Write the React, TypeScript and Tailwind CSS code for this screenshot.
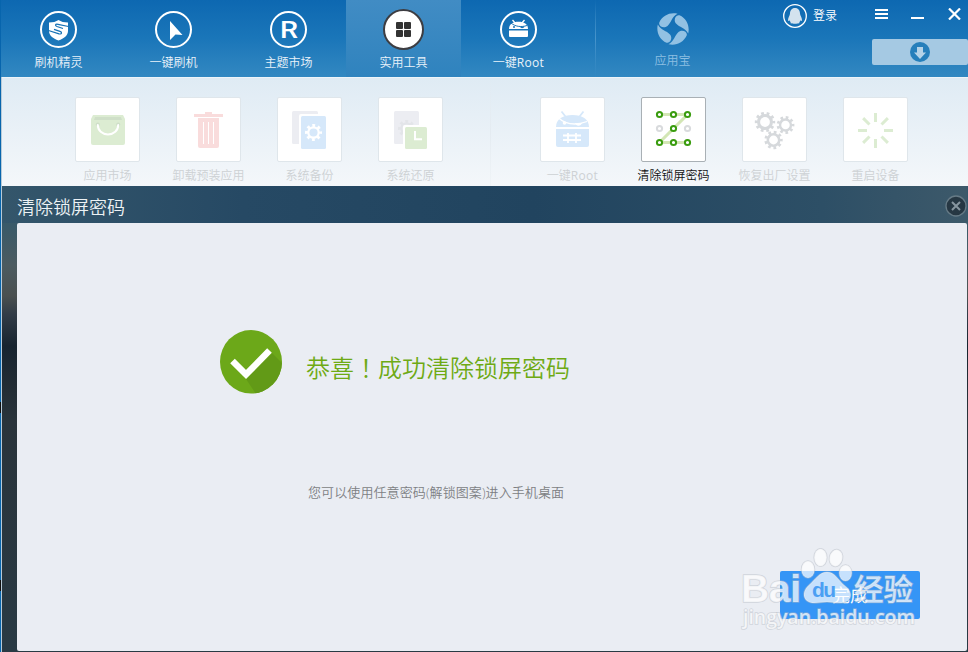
import type { ReactNode } from 'react';

type GearProps = { cx: number; cy: number; r: number; color: string; hole?: string; teeth?: number };

// solid ring with square teeth drawn as a dashed outer stroke
function Gear({ cx, cy, r, color, hole = '#fff', teeth = 8 }: GearProps) {
  const tr = r - 1.5;
  const step = (2 * Math.PI * tr) / (teeth * 2);
  return (
    <g>
      <circle cx={cx} cy={cy} r={tr} fill="none" stroke={color} strokeWidth="3" strokeDasharray={`${step} ${step}`} strokeDashoffset={step / 2} />
      <circle cx={cx} cy={cy} r={r - 2.2} fill={color} />
      <circle cx={cx} cy={cy} r={r * 0.48} fill={hole} />
    </g>
  );
}

function ToolSvg({ children }: { children: ReactNode }) {
  return (
    <svg width="65" height="65" viewBox="0 0 65 65" className="-m-px block">
      {children}
    </svg>
  );
}

const tools = [
  {
    label: '应用市场',
    icon: (
      <ToolSvg>
        <path d="M18 18h30l2 4v24a2 2 0 0 1-2 2H18a2 2 0 0 1-2-2V22z" fill="#dcecd2" />
        <path d="M20 20h26l1 3H19z" fill="#cfdfc8" />
        <circle cx="22.800" cy="27.500" r="2" fill="#cfdfc8" />
        <circle cx="43.200" cy="27.500" r="2" fill="#cfdfc8" />
        <path d="M22.800 28c0 5.500 4.500 9.500 10.200 9.500S43.200 33.500 43.200 28" fill="none" stroke="#fff" strokeWidth="2" strokeLinecap="round" />
      </ToolSvg>
    ),
  },
  {
    label: '卸载预装应用',
    icon: (
      <ToolSvg>
        <path d="M18 17h11v-2h7v2h11v3H18z" fill="#f9dcdc" />
        <path d="M22 21h21v28a2 2 0 0 1-2 2H24a2 2 0 0 1-2-2z" fill="#f9dcdc" />
        <path d="M27.500 25v22M32.500 25v22M37.500 25v22" stroke="#fff" />
      </ToolSvg>
    ),
  },
  {
    label: '系统备份',
    icon: (
      <ToolSvg>
        <rect x="15" y="14" width="26" height="33" rx="1.500" fill="#ecedf2" />
        <rect x="22" y="17" width="29" height="37" rx="2" fill="#fff" />
        <rect x="24" y="19" width="25" height="33" rx="1.500" fill="#d6e8fa" />
        <Gear cx={36.5} cy={35.5} r={8.5} color="#fff" hole="#d6e8fa" />
      </ToolSvg>
    ),
  },
  {
    label: '系统还原',
    icon: (
      <ToolSvg>
        <rect x="16" y="14" width="25" height="33" rx="1.500" fill="#ecedf2" />
        <Gear cx={28.5} cy={31.5} r={8.5} color="#e3e5e9" hole="#ecedf2" />
        <rect x="25" y="28" width="26" height="26" rx="2" fill="#fff" />
        <rect x="27" y="30" width="22" height="22" rx="1.500" fill="#dcecd2" />
        <path d="M37 34v8.200h7" fill="none" stroke="#fff" strokeWidth="2" />
      </ToolSvg>
    ),
  },
];

const deviceTools = [
  {
    label: '一键Root',
    icon: (
      <ToolSvg>
        <path d="M21.500 14.500l4 5M43.500 14.500l-4 5" stroke="#d6e8fa" strokeWidth="1.800" />
        <path d="M16 30c0-8 7-12 16.500-12S49 22 49 30z" fill="#d6e8fa" />
        <path d="M18 20.500c7 6.500 17 8.500 29 4" fill="none" stroke="#fff" strokeWidth="1.300" />
        <circle cx="24.500" cy="26" r="1.800" fill="#fff" />
        <path d="M35 26h7c-.5 3-6 4-7 0z" fill="#fff" />
        <path d="M16 32h33v16a2 2 0 0 1-2 2H18a2 2 0 0 1-2-2z" fill="#d6e8fa" />
        <path d="M23 38.500h18M23 43h18M28 36v10M36 36v10" stroke="#fff" strokeWidth="1.800" />
      </ToolSvg>
    ),
  },
  {
    label: '清除锁屏密码',
    active: true,
    icon: (
      <ToolSvg>
        <path d="M18.500 17.500h28l-28 28h28" fill="none" stroke="#d3e6b5" strokeWidth="3" />
        {[17.5, 31.5, 45.5].map((y) =>
          [18.5, 32.5, 46.5].map((x) => (
            <circle
              key={`${x}-${y}`}
              cx={x}
              cy={y}
              r="2.600"
              fill="#fff"
              stroke={y === 31.5 && x !== 32.5 ? '#d9dbdd' : '#3a9c0f'}
              strokeWidth="2"
            />
          ))
        )}
      </ToolSvg>
    ),
  },
  {
    label: '恢复出厂设置',
    icon: (
      <ToolSvg>
        <Gear cx={23} cy={25} r={10.2} color="#d6d9dc" teeth={10} />
        <Gear cx={43.5} cy={28} r={8.9} color="#d6d9dc" teeth={9} />
        <Gear cx={31.5} cy={43} r={9.2} color="#d6d9dc" teeth={9} />
      </ToolSvg>
    ),
  },
  {
    label: '重启设备',
    icon: (
      <ToolSvg>
        {[0, 45, 90, 135, 180, 225, 270, 315].map((a) => (
          <rect key={a} x="31" y="16" width="3" height="9" fill="#dcecd2" transform={`rotate(${a} 32.5 33.5)`} />
        ))}
      </ToolSvg>
    ),
  },
];

const tabs = [
  {
    label: '刷机精灵',
    icon: (
      <svg width="37" height="37" viewBox="0 0 37 37">
        <path d="M9 11.500c4 0 7-.8 9.500-2.500 2.500 1.700 5.500 2.500 9.500 2.500V20c0 4.500-4 7.500-9.500 9.500C13 27.500 9 24.500 9 20z" fill="#fff" />
        <path d="M28.500 15.500l-10.500-2.200c-3-.6-3.200 1.400-1 2.200l6 2" fill="none" stroke="#1571b5" strokeWidth="1.200" />
        <path d="M8.500 19.500l10.500 3.300c3 .8 3.400-1.600 1-2.400l-6-2" fill="none" stroke="#1571b5" strokeWidth="1.200" />
      </svg>
    ),
  },
  {
    label: '一键刷机',
    icon: (
      <svg width="37" height="37" viewBox="0 0 37 37">
        <path d="M15 10l12.500 14-7-.5L15 29z" fill="#fff" />
      </svg>
    ),
  },
  {
    label: '主题市场',
    icon: (
      <svg width="37" height="37" viewBox="0 0 37 37">
        <text x="10" y="27" fontFamily="Roboto, sans-serif" fontWeight="500" fontSize="24" fill="#fff" textLength="18" lengthAdjust="spacingAndGlyphs">
          R
        </text>
      </svg>
    ),
  },
  {
    label: '实用工具',
    active: true,
    icon: (
      <svg width="37" height="37" viewBox="0 0 37 37" fill="#333">
        <rect x="11" y="11" width="7" height="7" rx="1" />
        <rect x="19" y="11" width="7" height="7" rx="1" />
        <rect x="11" y="19" width="7" height="7" rx="1" />
        <rect x="19" y="19" width="7" height="7" rx="1" />
      </svg>
    ),
  },
  {
    label: '一键Root',
    icon: (
      <svg width="37" height="37" viewBox="0 0 37 37">
        <path d="M12.500 9l3 3.500M24.500 9l-3 3.500" stroke="#fff" strokeWidth="1.300" />
        <path d="M9 18c0-5 4-7.300 9.500-7.300S28 13 28 18z" fill="#fff" />
        <path d="M11 12c4 3.500 10 4.500 16 2.500" fill="none" stroke="#1a74b7" />
        <circle cx="14" cy="16" r="1" fill="#1a74b7" />
        <path d="M20 15.500h4.500c-.5 2-4 2.500-4.500 0z" fill="#1a74b7" />
        <path d="M9 19.500h19V25a1 1 0 0 1-1 1H10a1 1 0 0 1-1-1z" fill="#fff" />
      </svg>
    ),
  },
];

type ToolItem = { label: string; icon: ReactNode; active?: boolean };

function Tool({ label, icon, active }: ToolItem) {
  return (
    <div className="flex w-[101px] flex-col items-center">
      <div className={`size-[65px] rounded-[2px] border bg-white ${active ? 'border-[#a9b0b5]' : 'border-[#dfe6eb]'}`}>{icon}</div>
      <Label className={`mt-[5px] ${active ? 'text-[#111]' : 'text-[#cdd1d4]'}`}>{label}</Label>
    </div>
  );
}

// latin part of a label is set a little heavier and wider than the CJK part
function Label({ children, className }: { children: string; className: string }) {
  const [cjk, latin] = children.split(/(?=[A-Z])/);
  return (
    <span className={`text-[12px] leading-[18px] whitespace-nowrap ${className}`}>
      {cjk}
      {latin && <span className="font-normal tracking-[0.3px]">{latin}</span>}
    </span>
  );
}

function Header() {
  return (
    <header className="flex h-[77px] bg-linear-to-b from-[#0d68b1] via-[#1a76b9] to-[#3288c1] text-white">
      {tabs.map((tab) => (
        <div
          key={tab.label}
          className={`flex w-[115px] flex-col items-center ${tab.active ? 'bg-linear-to-b from-[#418cc4] to-[#2f83be]' : ''}`}
        >
          <div
            className={`flex items-center justify-center rounded-full ${
              tab.active ? 'mt-[9px] size-[41px] border-[2px] border-[#3d3d42] bg-white' : 'mt-[11px] mb-[2px] size-[37px] border-2 border-white'
            }`}
          >
            <div className="flex shrink-0 items-center justify-center">{tab.icon}</div>
          </div>
          <Label className="mt-[4px] text-[#eaf3fa]">{tab.label}</Label>
        </div>
      ))}
      <div className="ml-[19px] w-px bg-linear-to-b from-transparent via-[#4794cb] to-transparent" />
      <div className="ml-[45px] flex w-[64px] flex-col items-center text-[#8dbfe2]">
        <svg width="32" height="32" viewBox="0 0 32 32" className="mt-[13px]" fill="#92c1e3">
          {[0, 90, 180, 270].map((a) => (
            <path key={a} d="M20.500.8C13-1 5.500 2.500 2.300 9.500c-1.200 3.800 4.500 6.500 8.200 3.500C14.500 9.500 14.500 4 20.500.8z" transform={`rotate(${a} 16 16)`} />
          ))}
        </svg>
        <span className="mt-[7px] mr-px text-[12px] leading-[18px]">应用宝</span>
      </div>

      <div className="ml-auto flex flex-col items-end">
        <div className="flex h-[39px] items-start">
          <svg width="24" height="24" viewBox="0 0 24 24" className="mt-[4px]">
            <circle cx="12" cy="12" r="11.300" fill="none" stroke="#fff" strokeWidth="1.300" />
            <path d="M12 4c3.300 0 5 2.500 5 5.500 0 1.800 2 4 2 6.500 0 1-.8 1.500-1.500.3-.3 1-.8 1.500-1.300 2 1 1-.7 1.400-4.200 1.400s-5.200-.4-4.200-1.400c-.5-.5-1-1-1.300-2C5.800 17.500 5 17 5 16c0-2.500 2-4.700 2-6.500C7 6.500 8.700 4 12 4z" fill="#d3e2ee" />
          </svg>
          <span className="mt-[7px] ml-[6px] text-[12px] leading-[18px]">登录</span>
          <div className="mt-[9px] ml-[38px] flex h-[10px] w-[13px] flex-col justify-between">
            <i className="h-[2px] bg-white" />
            <i className="h-[2px] bg-white" />
            <i className="h-[2px] bg-white" />
          </div>
          <i className="mt-[17px] ml-[23px] h-[2px] w-[13px] bg-white" />
          <svg width="13" height="12" viewBox="0 0 13 12" className="mt-[8px] mr-[7px] ml-[24px]">
            <path d="M1 .5l11 11M12 .5l-11 11" stroke="#fff" strokeWidth="2.200" />
          </svg>
        </div>
        <div className="flex h-[26px] w-[96px] items-center justify-center rounded-[2px] bg-[#a5c9e3]">
          <svg width="20" height="20" viewBox="0 0 20 20">
            <circle cx="10" cy="10" r="10" fill="#267fbb" />
            <path d="M7 5h6v5.500h3L10 17l-6-6.500h3z" fill="#b5d3e8" />
          </svg>
        </div>
      </div>
    </header>
  );
}

function Watermark() {
  return (
    <svg width="190" height="96" viewBox="735 542 190 96" className="pointer-events-none absolute top-[319px] left-[718px]">
      <g fill="#fff" fillOpacity=".72" stroke="#b4bac3" strokeOpacity=".5" strokeWidth="1.500" paintOrder="stroke">
        <text x="741" y="602" fontFamily="Liberation Sans, sans-serif" fontWeight="700" fontSize="39" textLength="60">Bai</text>
        <ellipse cx="808" cy="569.500" rx="6.500" ry="8.500" />
        <ellipse cx="820.500" cy="557.500" rx="6.300" ry="8.800" />
        <ellipse cx="836" cy="558" rx="6.500" ry="8.500" transform="rotate(12 836 558)" />
        <ellipse cx="845.500" cy="573" rx="6.300" ry="8" />
        <path d="M827 572c8 0 11 8 17 13 12 9 6 18-4 18-5 0-8-1-13-1s-8 1-13 1c-10 0-14-10-5-18 6-5 10-13 18-13z" />
        <text x="854" y="599.500" fontFamily="Noto Sans CJK SC, sans-serif" fontWeight="500" fontSize="29.500">经验</text>
        <text x="743" y="624" fontFamily="Open Sans, sans-serif" fontWeight="600" fontSize="20" textLength="172" lengthAdjust="spacingAndGlyphs">jingyan.baidu.com</text>
      </g>
      <text x="812" y="597" fontFamily="Liberation Sans, sans-serif" fontWeight="700" fontSize="21" fill="#4b9ff3" textLength="24">du</text>
    </svg>
  );
}

export default function App() {
  return (
    <div className="flex h-[652px] w-[968px] overflow-hidden font-['Open_Sans','Noto_Sans_CJK_SC',sans-serif] font-[350]">
      <div className="flex w-[2px] shrink-0 flex-col border-r border-[#b8cbd8] bg-[#0765ad]">
        <i className="mt-[402px] h-[11px] bg-[#101010]" />
        <i className="mt-[167px] h-[11px] bg-[#101010]" />
      </div>
      <div className="-ml-px flex min-w-0 flex-1 flex-col">
        <Header />
        <div className="ml-px flex h-[109px] border-t border-[#edf4f9] bg-linear-to-b from-[#dfebf4] to-[#f4f7fa] pt-[19px] pl-[55px]">
          {tools.map((t) => (
            <Tool key={t.label} {...t} />
          ))}
          <div className="-mt-[19px] mr-[31px] ml-[29px] w-px bg-linear-to-b from-transparent via-[#e4ebf1] to-[#f0f4f7]" />
          {deviceTools.map((t) => (
            <Tool key={t.label} {...t} />
          ))}
        </div>

        <div className="ml-px flex flex-1 flex-col bg-[linear-gradient(#34566b_0,#3a5a69_40px,#4c5b60_80px,#4a5050_110px,#323c47_128px,#17242f_160px,#222c34_200px,#2a343b_235px,#293a44_100%)] pr-px pb-px">
          <div className="flex h-[37px] items-center justify-between bg-[linear-gradient(90deg,#34566b,#264964_25%,#21445f_55%,#2d4f66_85%,#3d596a)] pl-[15px] text-white">
            <h1 className="mt-[5px] text-[18px] leading-[27px] text-[#edf2f5]">清除锁屏密码</h1>
            <svg width="22" height="22" viewBox="0 0 22 22" className="mt-[3px]">
              <circle cx="11" cy="11" r="10" fill="#263743" stroke="#667a86" strokeWidth="1.300" />
              <path d="M7 7l8 8M15 7l-8 8" stroke="#8796a0" strokeWidth="2" />
            </svg>
          </div>
          <main className="relative ml-[15px] flex flex-1 flex-col rounded-[2px] bg-[#eaedf3]">
            <div className="mt-[107px] ml-[203px] flex">
              <svg width="63" height="64" viewBox="0 0 63 64">
                <defs>
                  <clipPath id="badge">
                    <ellipse cx="31" cy="31.800" rx="31" ry="31.800" />
                  </clipPath>
                </defs>
                <g clipPath="url(#badge)">
                  <rect width="63" height="64" fill="#6ca819" />
                  <path d="M26 49l26-26 20 20-30 30z" fill="#629a17" />
                </g>
                <path d="M12.500 31l13.500 13.500L49.500 20.500" fill="none" stroke="#fff" strokeWidth="6.500" />
              </svg>
              <p className="mt-[19px] ml-[23px] text-[24px] leading-[36px] text-[#6eaa14]">
                恭喜<span className="font-['Noto_Sans_CJK_TC',sans-serif]" lang="zh-TW">！</span>成功清除锁屏密码
              </p>
            </div>
            <p className="mt-[88px] ml-[291px] text-[13px] leading-[20px] tracking-[0.1px] text-[#7d7f83]">您可以使用任意密码(解锁图案)进入手机桌面</p>
            <button className="mt-auto mr-[47px] mb-[32px] flex h-[48px] w-[140px] items-center justify-center self-end rounded-[2px] bg-[#3595f6] text-[18px] text-white">
              完成
            </button>
            <Watermark />
          </main>
        </div>
      </div>
    </div>
  );
}
